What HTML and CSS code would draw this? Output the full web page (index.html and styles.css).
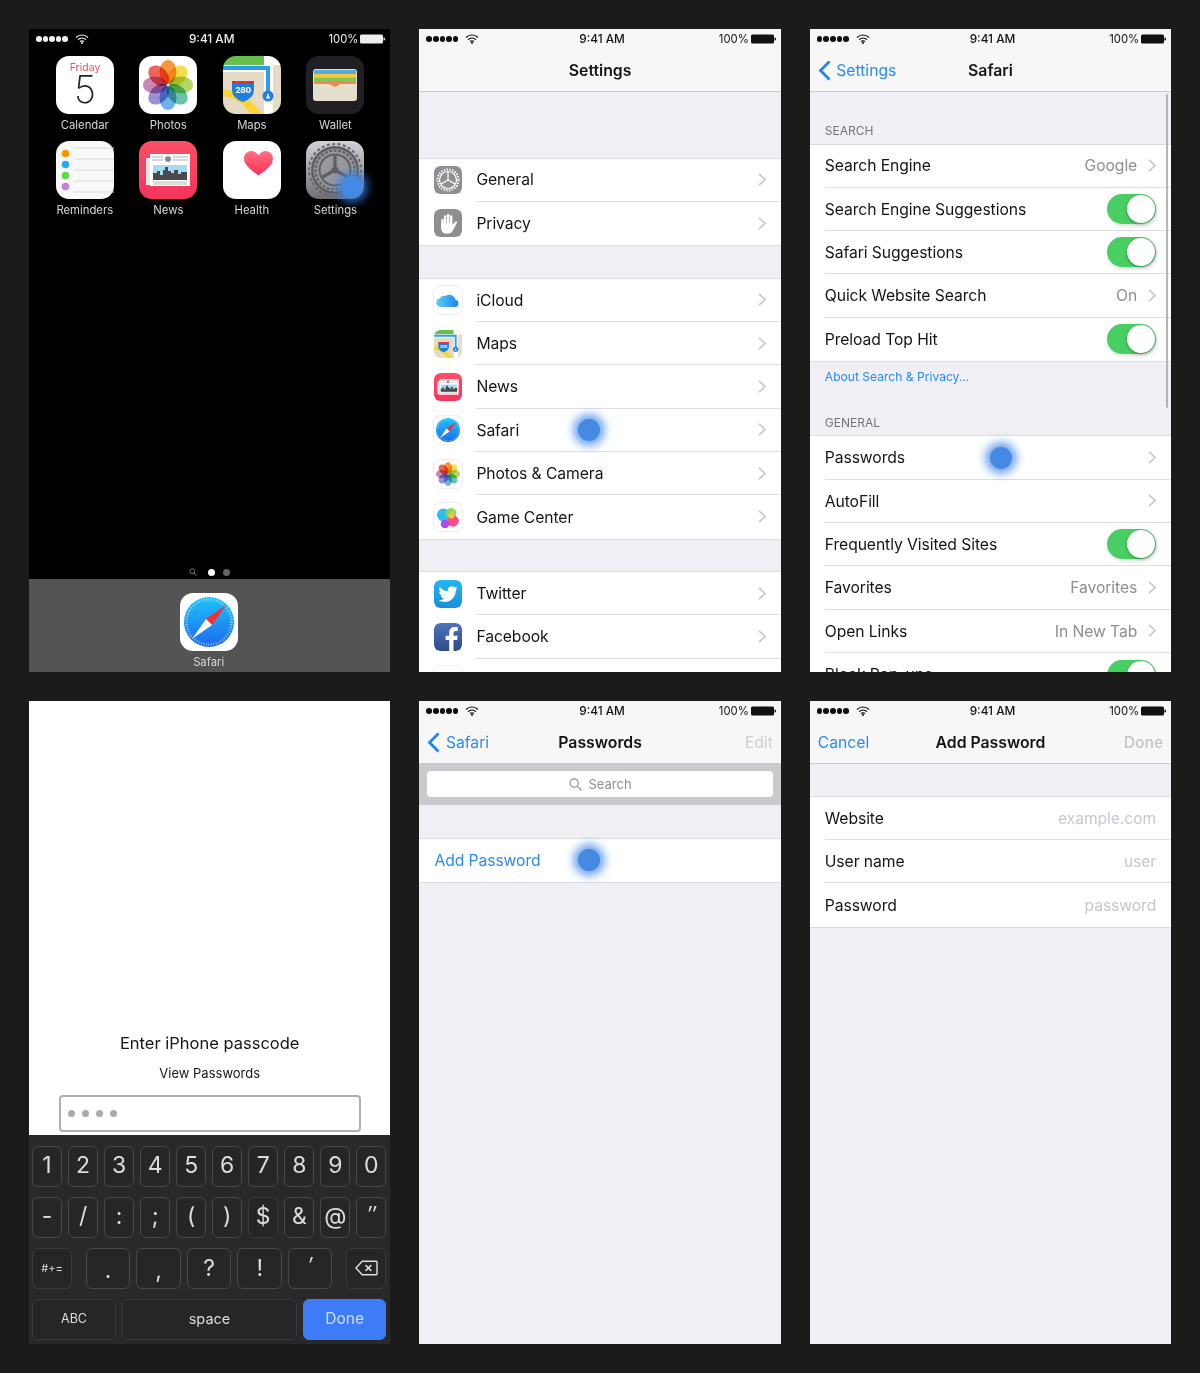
FILE: index.html
```html
<!DOCTYPE html>
<html lang="en">
<head>
<meta charset="utf-8">
<title>iOS Safari passwords walkthrough</title>
<link rel="stylesheet" href="styles.css">
</head>
<body>
<svg class="sprite" aria-hidden="true">
  <defs>
    <linearGradient id="g-safari" x1="0" y1="0" x2="0" y2="1"><stop offset="0" stop-color="#1fc4fb"/><stop offset="1" stop-color="#1c68ee"/></linearGradient>
    <linearGradient id="g-news" x1="0" y1="0" x2="0" y2="1"><stop offset="0" stop-color="#fc4f68"/><stop offset="1" stop-color="#f5345c"/></linearGradient>
    <linearGradient id="g-heart" x1="0" y1="0" x2="0" y2="1"><stop offset="0" stop-color="#ff6f83"/><stop offset="1" stop-color="#ff2d55"/></linearGradient>
    <linearGradient id="g-gear" x1="0" y1="0" x2="0" y2="1"><stop offset="0" stop-color="#d3d3d7"/><stop offset="1" stop-color="#6e6e74"/></linearGradient>
    <linearGradient id="g-tw" x1="0" y1="0" x2="0" y2="1"><stop offset="0" stop-color="#22b6f2"/><stop offset="1" stop-color="#1a8fd8"/></linearGradient>
    <linearGradient id="g-fb" x1="0" y1="0" x2="0" y2="1"><stop offset="0" stop-color="#4f74b8"/><stop offset="1" stop-color="#2c4b8c"/></linearGradient>
    <linearGradient id="g-cloud" x1="0" y1="0" x2="1" y2="0"><stop offset="0" stop-color="#5dd0f7"/><stop offset="1" stop-color="#1d84ee"/></linearGradient>

    <symbol id="i-calendar" viewBox="0 0 58 58">
      <rect width="58" height="58" rx="13" fill="#fff"/>
      <text x="29" y="15" class="svg-cal-day">Friday</text>
      <text x="29" y="47" class="svg-cal-num">5</text>
    </symbol>
    <symbol id="i-photos" viewBox="0 0 58 58">
      <rect width="58" height="58" rx="13" fill="#fff"/>
      <g class="petals">
        <ellipse class="petal" cx="29" cy="16" rx="8.500" ry="12" fill="#f9983a"/>
        <ellipse class="petal" cx="29" cy="16" rx="8.500" ry="12" fill="#f2e04a" transform="rotate(45 29 29)"/>
        <ellipse class="petal" cx="29" cy="16" rx="8.500" ry="12" fill="#aed766" transform="rotate(90 29 29)"/>
        <ellipse class="petal" cx="29" cy="16" rx="8.500" ry="12" fill="#66c4ab" transform="rotate(135 29 29)"/>
        <ellipse class="petal" cx="29" cy="16" rx="8.500" ry="12" fill="#6fb1ea" transform="rotate(180 29 29)"/>
        <ellipse class="petal" cx="29" cy="16" rx="8.500" ry="12" fill="#9c90d4" transform="rotate(225 29 29)"/>
        <ellipse class="petal" cx="29" cy="16" rx="8.500" ry="12" fill="#cb86b8" transform="rotate(270 29 29)"/>
        <ellipse class="petal" cx="29" cy="16" rx="8.500" ry="12" fill="#ec655c" transform="rotate(315 29 29)"/>
      </g>
    </symbol>
    <symbol id="i-maps" viewBox="0 0 58 58">
      <clipPath id="c-maps"><rect width="58" height="58" rx="13"/></clipPath>
      <g clip-path="url(#c-maps)">
        <rect width="58" height="58" fill="#e6dcc6"/>
        <rect width="41" height="9" fill="#68bf4b"/>
        <rect x="41" width="17" height="9" fill="#fff"/>
        <path d="M49 0h9v9z" fill="#f6c6d4"/>
        <rect x="41" width="9" height="58" fill="#fff"/>
        <rect x="0" y="9" width="45" height="7" fill="#fff"/>
        <path d="M0 12h45v24" fill="none" stroke="#2f9bf0" stroke-width="4"/>
        <path d="M0 40q12 2 20 9l8 9h12l-12-13q-12-10-28-12z" fill="#fbd436"/>
        <path d="M9 27h22v7q0 8-11 12-11-4-11-12z" fill="#1f7fe0"/>
        <path d="M9 25h22v3H9z" fill="#d8343a"/>
        <text x="20" y="36.500" class="svg-shield">280</text>
        <circle cx="45" cy="40" r="5.500" fill="#1f7fe0"/>
        <path d="M45 37l2 5.500h-4z" fill="#fff"/>
      </g>
    </symbol>
    <symbol id="i-wallet" viewBox="0 0 58 58">
      <rect width="58" height="58" rx="13" fill="#202024"/>
      <rect x="7" y="13" width="44" height="32" rx="3" fill="#e4decd"/>
      <rect x="8" y="14" width="42" height="4" fill="#58abd8"/>
      <rect x="8" y="18" width="42" height="3.500" fill="#f0cb40"/>
      <rect x="8" y="21.500" width="42" height="3.500" fill="#80c45c"/>
      <path d="M8 25h42v3H36q-3 0-5 2l-2 1-2-1q-2-2-5-2H8z" fill="#ee8a50"/>
    </symbol>
    <symbol id="i-reminders" viewBox="0 0 58 58">
      <rect width="58" height="58" rx="13" fill="#f8f8f8"/>
      <path d="M18 7h40M18 18h40M18 29h40M18 40h40M18 51h40" stroke="#d8d8d8" stroke-width="1"/>
      <circle cx="9.500" cy="12.500" r="3.800" fill="#ff9500"/>
      <circle cx="9.500" cy="23.500" r="3.800" fill="#2aa9f5"/>
      <circle cx="9.500" cy="34.500" r="3.800" fill="#63d84a"/>
      <circle cx="9.500" cy="45.500" r="3.800" fill="#c77ee0"/>
    </symbol>
    <symbol id="i-news" viewBox="0 0 58 58">
      <rect width="58" height="58" rx="13" fill="url(#g-news)"/>
      <path d="M7 17h4v27H7z" fill="#e8e8ea"/>
      <rect x="11" y="13" width="40" height="32" fill="#fff"/>
      <circle cx="29" cy="18" r="3" fill="#8a8a8e"/>
      <path d="M13 16h11M34 16h15M13 19h11M34 19h15" stroke="#9b9b9f" stroke-width=".8"/>
      <rect x="14" y="24" width="34" height="15" fill="#a7dbf4"/>
      <path d="M14 39v-7h4v-2h3v4h3v-5h2v-3h3v4h3v2h3v-3h4v4h3v-2h6v8z" fill="#4a4a4c"/>
      <path d="M14 41h34M14 43h34" stroke="#9b9b9f" stroke-width=".7"/>
    </symbol>
    <symbol id="i-health" viewBox="0 0 58 58">
      <rect width="58" height="58" rx="13" fill="#fff"/>
      <path d="M35.500 34.500C29 29.500 21 24.500 21 17.500 21 13 24.500 10 28 10c3.300 0 6 1.800 7.500 4.500C37 11.800 39.700 10 43 10c3.500 0 7 3 7 7.500 0 7-8 12-14.500 17z" fill="url(#g-heart)"/>
    </symbol>
    <symbol id="i-settings" viewBox="0 0 58 58">
      <rect width="58" height="58" rx="13" fill="url(#g-gear)"/>
      <circle cx="29" cy="29" r="26" fill="none" stroke="#66666a" stroke-width="2" stroke-dasharray="3 2.400"/>
      <circle cx="29" cy="29" r="24" fill="#5f5f63"/>
      <circle cx="29" cy="29" r="21.500" fill="#9a9a9e"/>
      <circle cx="29" cy="29" r="19.500" fill="none" stroke="#66666a" stroke-width="2.500" stroke-dasharray="3 1.500"/>
      <circle cx="29" cy="29" r="16.500" fill="#5f5f63"/>
      <circle cx="29" cy="29" r="14.500" fill="#98989c"/>
      <path d="M29 29V14.500M29 29l12.500 7.200M29 29l-12.500 7.200" stroke="#5f5f63" stroke-width="3.200"/>
      <circle cx="29" cy="29" r="3.500" fill="#5f5f63"/>
    </symbol>
    <symbol id="i-safari" viewBox="0 0 58 58">
      <rect width="58" height="58" rx="13" fill="#fff"/>
      <circle cx="29" cy="29" r="25" fill="url(#g-safari)"/>
      <circle cx="29" cy="29" r="22.500" fill="none" stroke="#fff" stroke-opacity=".7" stroke-width="2.500" stroke-dasharray=".7 1.800"/>
      <path d="M46 12L32 32 26 26z" fill="#ff2d2d"/>
      <path d="M12 46L26 26 32 32z" fill="#fff"/>
    </symbol>
    <symbol id="i-general" viewBox="0 0 28 28">
      <rect width="28" height="28" rx="6" fill="#8e8e93"/>
      <circle cx="14" cy="14" r="10.500" fill="none" stroke="#fff" stroke-width="2" stroke-dasharray="1.500 1.300"/>
      <circle cx="14" cy="14" r="8.500" fill="none" stroke="#fff" stroke-width="1.200"/>
      <path d="M14 14V6M14 14l7 4M14 14l-7 4" stroke="#fff" stroke-width="1.200"/>
    </symbol>
    <symbol id="i-hand" viewBox="0 0 28 28">
      <rect width="28" height="28" rx="6" fill="#8e8e93"/>
      <path d="M8.500 11v8M11.200 7.500V15M14.200 6v9M17.200 7.500V15" stroke="#fff" stroke-width="2.400" stroke-linecap="round"/>
      <path d="M7.300 14h11.100v2l3-3.500c1-.8 2.200.2 1.500 1.300l-3.600 7c-1 2.400-2.600 3.700-5 3.700h-2c-3 0-5-2-5-5z" fill="#fff"/>
    </symbol>
    <symbol id="i-icloud" viewBox="0 0 28 28">
      <rect width="28" height="28" rx="6" fill="#fff"/>
      <path d="M6.500 21a4.300 4.300 0 0 1-.8-8.500 5 5 0 0 1 5.800-2.500 6.200 6.200 0 0 1 9.800 3.800 3.700 3.700 0 0 1 .5 7.200z" fill="url(#g-cloud)"/>
    </symbol>
    <symbol id="i-gamecenter" viewBox="0 0 28 28">
      <rect width="28" height="28" rx="6" fill="#fff"/>
      <circle cx="9.500" cy="12" r="6.500" fill="#2dbcf5"/>
      <circle cx="17" cy="10.500" r="5.500" fill="#8bd44a" opacity=".9"/>
      <circle cx="19" cy="18" r="5.800" fill="#f7477f" opacity=".95"/>
      <circle cx="11" cy="21" r="4.300" fill="#a646e8" opacity=".95"/>
      <circle cx="17.500" cy="12.500" r="3" fill="#f3c532"/>
    </symbol>
    <symbol id="i-twitter" viewBox="0 0 28 28">
      <rect width="28" height="28" rx="6" fill="url(#g-tw)"/>
      <g transform="translate(4.500 4.500) scale(.8)"><path fill="#fff" d="M23.953 4.570a10 10 0 0 1-2.825.775 4.958 4.958 0 0 0 2.163-2.723c-.951.555-2.005.959-3.127 1.184a4.920 4.920 0 0 0-8.384 4.482C7.690 8.095 4.067 6.130 1.640 3.162a4.822 4.822 0 0 0-.666 2.475c0 1.710.870 3.213 2.188 4.096a4.904 4.904 0 0 1-2.228-.616v.060a4.923 4.923 0 0 0 3.946 4.827 4.996 4.996 0 0 1-2.212.085 4.936 4.936 0 0 0 4.604 3.417 9.867 9.867 0 0 1-6.102 2.105c-.390 0-.779-.023-1.170-.067a13.995 13.995 0 0 0 7.557 2.209c9.053 0 13.998-7.496 13.998-13.985 0-.210 0-.420-.015-.630A9.935 9.935 0 0 0 24 4.590z"/></g>
    </symbol>
    <symbol id="i-facebook" viewBox="0 0 28 28">
      <rect width="28" height="28" rx="6" fill="url(#g-fb)"/>
      <path fill="#fff" d="M19.500 28V17h3.600l.6-4.300h-4.200V10c0-1.200.4-2.100 2.100-2.100h2.200V4.200c-.4 0-1.700-.2-3.200-.2-3.200 0-5.400 1.900-5.400 5.500v3.200h-3.600V17h3.600v11z"/>
    </symbol>
    <symbol id="i-blank" viewBox="0 0 28 28">
      <rect width="28" height="28" rx="6" fill="#fff"/>
    </symbol>
    <symbol id="i-wifi" viewBox="0 0 14 10">
      <path d="M1 3.500a8.500 8.500 0 0 1 12 0M3 5.700a5.600 5.600 0 0 1 8 0M5 7.700a2.800 2.800 0 0 1 4 0" fill="none" stroke="currentColor" stroke-width="1.200"/>
      <circle cx="7" cy="9" r="1" fill="currentColor"/>
    </symbol>
    <symbol id="i-battery" viewBox="0 0 25 10">
      <rect x="0" y="0.500" width="23" height="9" rx="1.500" fill="currentColor"/>
      <path d="M23.500 3.500c1 0 1.500.5 1.500 1.500s-.5 1.500-1.500 1.500z" fill="currentColor"/>
    </symbol>
    <symbol id="i-chev" viewBox="0 0 8 13">
      <path d="M1 .8l6 5.700-6 5.700" fill="none" stroke="#c7c7cc" stroke-width="1.600"/>
    </symbol>
    <symbol id="i-back" viewBox="0 0 13 21">
      <path d="M11.500 1.500l-9 9 9 9" fill="none" stroke="#1f84ee" stroke-width="2.800"/>
    </symbol>
  </defs>
</svg>

<main class="board">

  <section class="screen home">
    <div class="status status-light">
      <div class="status-left"><span class="signal"><i></i><i></i><i></i><i></i><i></i></span><svg class="wifi"><use href="#i-wifi"/></svg></div>
      <div class="time">9:41 AM</div>
      <div class="status-right">100%<svg class="battery"><use href="#i-battery"/></svg></div>
    </div>
    <div class="apps">
      <div class="app"><svg class="app-icon"><use href="#i-calendar"/></svg><span>Calendar</span></div>
      <div class="app"><svg class="app-icon"><use href="#i-photos"/></svg><span>Photos</span></div>
      <div class="app"><svg class="app-icon"><use href="#i-maps"/></svg><span>Maps</span></div>
      <div class="app"><svg class="app-icon"><use href="#i-wallet"/></svg><span>Wallet</span></div>
      <div class="app"><svg class="app-icon"><use href="#i-reminders"/></svg><span>Reminders</span></div>
      <div class="app"><svg class="app-icon"><use href="#i-news"/></svg><span>News</span></div>
      <div class="app"><svg class="app-icon"><use href="#i-health"/></svg><span>Health</span></div>
      <div class="app"><svg class="app-icon"><use href="#i-settings"/></svg><span>Settings</span></div>
    </div>
    <div class="pager">
      <svg class="pager-search" viewBox="0 0 8 8"><circle cx="3.200" cy="3.200" r="2.400" fill="none" stroke="#777" stroke-width="1"/><path d="M5 5l2.500 2.500" stroke="#777" stroke-width="1"/></svg>
      <i class="pager-dot pager-on"></i>
      <i class="pager-dot"></i>
    </div>
    <div class="dock">
      <div class="app"><svg class="app-icon"><use href="#i-safari"/></svg><span>Safari</span></div>
    </div>
    <b class="touch touch-settings"></b>
  </section>

  <section class="screen">
    <header class="head">
      <div class="status">
        <div class="status-left"><span class="signal"><i></i><i></i><i></i><i></i><i></i></span><svg class="wifi"><use href="#i-wifi"/></svg></div>
        <div class="time">9:41 AM</div>
        <div class="status-right">100%<svg class="battery"><use href="#i-battery"/></svg></div>
      </div>
      <div class="nav"><div></div><h1>Settings</h1><div></div></div>
    </header>
    <div class="group gap-first">
      <div class="row"><svg class="row-icon"><use href="#i-general"/></svg><div class="row-body"><span class="row-label">General</span><svg class="chev"><use href="#i-chev"/></svg></div></div>
      <div class="row"><svg class="row-icon"><use href="#i-hand"/></svg><div class="row-body"><span class="row-label">Privacy</span><svg class="chev"><use href="#i-chev"/></svg></div></div>
    </div>
    <div class="group gap-section">
      <div class="row"><svg class="row-icon bordered"><use href="#i-icloud"/></svg><div class="row-body"><span class="row-label">iCloud</span><svg class="chev"><use href="#i-chev"/></svg></div></div>
      <div class="row"><svg class="row-icon"><use href="#i-maps"/></svg><div class="row-body"><span class="row-label">Maps</span><svg class="chev"><use href="#i-chev"/></svg></div></div>
      <div class="row"><svg class="row-icon"><use href="#i-news"/></svg><div class="row-body"><span class="row-label">News</span><svg class="chev"><use href="#i-chev"/></svg></div></div>
      <div class="row"><svg class="row-icon bordered"><use href="#i-safari"/></svg><div class="row-body"><span class="row-label">Safari</span><svg class="chev"><use href="#i-chev"/></svg></div></div>
      <div class="row"><svg class="row-icon bordered"><use href="#i-photos"/></svg><div class="row-body"><span class="row-label">Photos &amp; Camera</span><svg class="chev"><use href="#i-chev"/></svg></div></div>
      <div class="row"><svg class="row-icon bordered"><use href="#i-gamecenter"/></svg><div class="row-body"><span class="row-label">Game Center</span><svg class="chev"><use href="#i-chev"/></svg></div></div>
    </div>
    <div class="group gap-section">
      <div class="row"><svg class="row-icon"><use href="#i-twitter"/></svg><div class="row-body"><span class="row-label">Twitter</span><svg class="chev"><use href="#i-chev"/></svg></div></div>
      <div class="row"><svg class="row-icon"><use href="#i-facebook"/></svg><div class="row-body"><span class="row-label">Facebook</span><svg class="chev"><use href="#i-chev"/></svg></div></div>
      <div class="row"><svg class="row-icon bordered"><use href="#i-blank"/></svg><div class="row-body"></div></div>
    </div>
    <b class="touch touch-safari"></b>
  </section>

  <section class="screen">
    <header class="head">
      <div class="status">
        <div class="status-left"><span class="signal"><i></i><i></i><i></i><i></i><i></i></span><svg class="wifi"><use href="#i-wifi"/></svg></div>
        <div class="time">9:41 AM</div>
        <div class="status-right">100%<svg class="battery"><use href="#i-battery"/></svg></div>
      </div>
      <div class="nav"><a class="nav-back"><svg class="back"><use href="#i-back"/></svg>Settings</a><h1>Safari</h1><div></div></div>
    </header>
    <div class="section-label label-first">SEARCH</div>
    <div class="group">
      <div class="row"><div class="row-body"><span class="row-label">Search Engine</span><span class="row-value">Google</span><svg class="chev"><use href="#i-chev"/></svg></div></div>
      <div class="row"><div class="row-body"><span class="row-label">Search Engine Suggestions</span><span class="toggle"></span></div></div>
      <div class="row"><div class="row-body"><span class="row-label">Safari Suggestions</span><span class="toggle"></span></div></div>
      <div class="row"><div class="row-body"><span class="row-label">Quick Website Search</span><span class="row-value">On</span><svg class="chev"><use href="#i-chev"/></svg></div></div>
      <div class="row"><div class="row-body"><span class="row-label">Preload Top Hit</span><span class="toggle"></span></div></div>
    </div>
    <div class="section-note">About Search &amp; Privacy...</div>
    <div class="section-label label-next">GENERAL</div>
    <div class="group">
      <div class="row"><div class="row-body"><span class="row-label">Passwords</span><svg class="chev"><use href="#i-chev"/></svg></div></div>
      <div class="row"><div class="row-body"><span class="row-label">AutoFill</span><svg class="chev"><use href="#i-chev"/></svg></div></div>
      <div class="row"><div class="row-body"><span class="row-label">Frequently Visited Sites</span><span class="toggle"></span></div></div>
      <div class="row"><div class="row-body"><span class="row-label">Favorites</span><span class="row-value">Favorites</span><svg class="chev"><use href="#i-chev"/></svg></div></div>
      <div class="row"><div class="row-body"><span class="row-label">Open Links</span><span class="row-value">In New Tab</span><svg class="chev"><use href="#i-chev"/></svg></div></div>
      <div class="row"><div class="row-body"><span class="row-label">Block Pop-ups</span><span class="toggle"></span></div></div>
    </div>
    <b class="scrollbar"></b>
    <b class="touch touch-passwords"></b>
  </section>

  <section class="screen passcode">
    <div class="passcode-form">
      <h2>Enter iPhone passcode</h2>
      <p>View Passwords</p>
      <div class="passcode-field"><i></i><i></i><i></i><i></i></div>
    </div>
    <div class="keyboard">
      <div class="key-row">
        <span class="key">1</span><span class="key">2</span><span class="key">3</span><span class="key">4</span><span class="key">5</span><span class="key">6</span><span class="key">7</span><span class="key">8</span><span class="key">9</span><span class="key">0</span>
      </div>
      <div class="key-row">
        <span class="key">-</span><span class="key">/</span><span class="key">:</span><span class="key">;</span><span class="key">(</span><span class="key">)</span><span class="key key-dim">$</span><span class="key">&amp;</span><span class="key">@</span><span class="key key-quote">″</span>
      </div>
      <div class="key-row key-row-mid">
        <span class="key key-side key-dim key-small">#+=</span>
        <span class="key-center">
          <span class="key key-low">.</span><span class="key key-low">,</span><span class="key">?</span><span class="key">!</span><span class="key key-quote">′</span>
        </span>
        <span class="key key-side key-dim"><svg class="del" viewBox="0 0 24 16"><path d="M7.500 1H22a1 1 0 0 1 1 1v12a1 1 0 0 1-1 1H7.500L1 8z" fill="none" stroke="#ddd" stroke-width="1.500" stroke-linejoin="round"/><path d="M11 5l6 6M17 5l-6 6" stroke="#ddd" stroke-width="1.500"/></svg></span>
      </div>
      <div class="key-row key-row-bottom">
        <span class="key key-dim key-abc">ABC</span>
        <span class="key key-dim key-space">space</span>
        <span class="key key-done">Done</span>
      </div>
    </div>
  </section>

  <section class="screen">
    <header class="head">
      <div class="status">
        <div class="status-left"><span class="signal"><i></i><i></i><i></i><i></i><i></i></span><svg class="wifi"><use href="#i-wifi"/></svg></div>
        <div class="time">9:41 AM</div>
        <div class="status-right">100%<svg class="battery"><use href="#i-battery"/></svg></div>
      </div>
      <div class="nav"><a class="nav-back"><svg class="back"><use href="#i-back"/></svg>Safari</a><h1>Passwords</h1><span class="nav-right">Edit</span></div>
    </header>
    <div class="search-band">
      <div class="search-field"><svg class="search-glass" viewBox="0 0 14 14"><circle cx="5.500" cy="5.500" r="4.500" fill="none" stroke="#8e8e93" stroke-width="1.200"/><path d="M9 9l4.500 4.500" stroke="#8e8e93" stroke-width="1.300"/></svg>Search</div>
    </div>
    <div class="group gap-section">
      <div class="row"><div class="row-body"><span class="row-label row-link">Add Password</span></div></div>
    </div>
    <b class="touch touch-add"></b>
  </section>

  <section class="screen">
    <header class="head">
      <div class="status">
        <div class="status-left"><span class="signal"><i></i><i></i><i></i><i></i><i></i></span><svg class="wifi"><use href="#i-wifi"/></svg></div>
        <div class="time">9:41 AM</div>
        <div class="status-right">100%<svg class="battery"><use href="#i-battery"/></svg></div>
      </div>
      <div class="nav"><a class="nav-back">Cancel</a><h1>Add Password</h1><span class="nav-right nav-strong">Done</span></div>
    </header>
    <div class="group gap-form">
      <div class="row"><div class="row-body"><span class="row-label">Website</span><span class="placeholder">example.com</span></div></div>
      <div class="row"><div class="row-body"><span class="row-label">User name</span><span class="placeholder">user</span></div></div>
      <div class="row"><div class="row-body"><span class="row-label">Password</span><span class="placeholder">password</span></div></div>
    </div>
  </section>

</main>
</body>
</html>
```

FILE: styles.css
```css
* { box-sizing: border-box; }

html, body { margin: 0; }

body {
  background: #1b1b1c;
  font-family: Inter, "Liberation Sans", sans-serif;
  color: #141414;
}

.sprite { position: absolute; width: 0; height: 0; }

.board {
  display: grid;
  grid-template-columns: repeat(3, 361.4px);
  grid-template-rows: 643px 642.5px;
  column-gap: 29px;
  row-gap: 29px;
  padding: 29px;
}

.screen {
  position: relative;
  overflow: hidden;
  background: #efeff4;
}

/* status bar */
.status {
  display: grid;
  grid-template-columns: 1fr auto 1fr;
  align-items: center;
  height: 20px;
  padding: 0 5px 0 7px;
  font-size: 11.3px;
  color: #111;
}
.status-light { color: #eee; }
.status-left { display: flex; align-items: center; gap: 7px; }
.signal { display: flex; gap: 1px; }
.signal i { width: 5.6px; height: 5.6px; border-radius: 50%; background: currentColor; }
.wifi { width: 14px; height: 10px; }
.time { font-size: 11.8px; font-weight: 500; padding-left: 2px; }
.status-right { display: flex; justify-content: flex-end; align-items: center; gap: 2px; font-weight: 400; }
.battery { width: 25px; height: 10px; }

/* nav */
.head {
  height: 63px;
  background: #f7f7f8;
  border-bottom: 1px solid #c9c9cd;
}
.nav {
  display: grid;
  grid-template-columns: 1fr auto 1fr;
  align-items: center;
  height: 42px;
  padding: 0 8px;
  font-size: 15.7px;
}
.nav h1 { margin: 0; font-size: 15.8px; font-weight: 600; }
.nav-back { display: flex; align-items: center; gap: 5.5px; color: #2a8bf2; }
.back { width: 13px; height: 21px; }
.nav-right { text-align: right; color: #cfcfd3; }
.nav-strong { font-weight: 500; color: #c4c4c9; }

/* rows */
.group {
  background: #fff;
  box-shadow: 0 -1px 0 #dcdce0, 0 1px 0 #dcdce0;
}
.gap-first { margin-top: 66.5px; }
.gap-section { margin-top: 33.5px; }
.gap-form { margin-top: 32.8px; }

.row {
  display: flex;
  align-items: center;
  height: 43.33px;
  padding-left: 15px;
  font-size: 15.7px;
  letter-spacing: -.08px;
}
.row-icon { flex: none; width: 28px; height: 28px; margin-right: 14px; border-radius: 6px; }
.bordered { box-shadow: 0 0 0 1px #eeeef0; }
.row-body {
  flex: 1;
  display: flex;
  align-items: center;
  height: 100%;
  padding-right: 15px;
  border-bottom: 1px solid #dedee2;
}
.row:last-child .row-body { border-bottom: 0; }
.row-label { flex: 1; padding-top: .5px; }
.row-link { color: #2a8bf2; }
.row-value { color: #8e8e93; margin-right: 11px; padding-top: .5px; }
.placeholder { color: #c7c7cd; padding-top: .5px; }
.chev { flex: none; width: 8px; height: 13px; }

.toggle {
  position: relative;
  flex: none;
  width: 49px;
  height: 30px;
  border-radius: 15px;
  background: #48ce63;
  box-shadow: 1px 2px 4px rgba(0, 0, 0, .15);
}
.toggle::after {
  content: "";
  position: absolute;
  top: 1px;
  right: 1px;
  width: 28px;
  height: 28px;
  border-radius: 50%;
  background: #fff;
  box-shadow: 0 1px 3px rgba(0, 0, 0, .35);
}

.section-label {
  display: flex;
  align-items: flex-end;
  padding: 0 15px 5.7px;
  font-size: 12px;
  line-height: 16px;
  color: #75757a;
}
.label-first { height: 52.5px; }
.label-next { height: 51.3px; }
.section-note {
  height: 24px;
  padding: 8px 15px 0;
  font-size: 12.1px;
  line-height: 16px;
  color: #2a8bf2;
}

.scrollbar {
  position: absolute;
  top: 65px;
  right: 3px;
  width: 2.5px;
  height: 314px;
  border-radius: 2px;
  background: #b4b4b8;
}

/* touch marker */
.touch {
  position: absolute;
  width: 22px;
  height: 22px;
  border-radius: 50%;
  background: #458ae2;
  box-shadow: 0 0 9px 5px rgba(58, 130, 230, .72);
}
.touch-settings { left: 312px; top: 147px; }
.touch-safari { left: 159px; top: 390px; }
.touch-passwords { left: 180px; top: 418px; }
.touch-add { left: 159px; top: 148px; }

/* home */
.home {
  display: flex;
  flex-direction: column;
  background: #000;
}
.apps {
  display: grid;
  grid-template-columns: repeat(4, 1fr);
  row-gap: 9px;
  margin-top: 7px;
  padding: 0 13.2px 0 14px;
}
.app {
  display: flex;
  flex-direction: column;
  align-items: center;
  font-size: 11.3px;
  line-height: 14px;
  color: #d6d6d6;
}
.app span { margin-top: 4px; }
.app-icon { width: 58px; height: 58px; }
.pager {
  display: flex;
  align-items: center;
  justify-content: center;
  gap: 8px;
  height: 10px;
  margin-top: auto;
  margin-bottom: 2px;
}
.pager-search { width: 8px; height: 8px; margin-right: 3px; }
.pager-dot { width: 7px; height: 7px; border-radius: 50%; background: #666; }
.pager-on { background: #fff; }
.dock {
  display: flex;
  justify-content: center;
  height: 93px;
  padding: 13.5px 2px 0 0;
  background: #545454;
}
.dock .app span { margin-top: 4px; }

.petals { isolation: isolate; }
.petal { mix-blend-mode: multiply; }

.svg-cal-day { font-size: 10.5px; fill: #f0525c; text-anchor: middle; }
.svg-cal-num { font-size: 38px; font-weight: 200; fill: #222; text-anchor: middle; }
.svg-shield { font-size: 8px; font-weight: 700; fill: #fff; text-anchor: middle; }

/* passcode */
.passcode {
  display: flex;
  flex-direction: column;
  justify-content: flex-end;
  background: #fff;
}
.passcode-form { text-align: center; height: 102.5px; }
.passcode-form h2 { margin: 0; font-size: 16.5px; font-weight: 400; line-height: 20px; }
.passcode-form p { margin: 12px 0 0; font-size: 13px; line-height: 16px; }
.passcode-field {
  display: flex;
  align-items: center;
  gap: 7px;
  width: 302px;
  height: 37px;
  margin: 14px auto 0;
  padding-left: 7px;
  border: 2px solid #b0b0b0;
  border-radius: 4px;
}
.passcode-field i { width: 7px; height: 7px; border-radius: 50%; background: #aaa; }

.keyboard {
  display: flex;
  flex-direction: column;
  gap: 10.3px;
  height: 208.5px;
  padding: 10.5px 4px 0 3px;
  background: #29292b;
}
.key-row {
  display: grid;
  grid-template-columns: repeat(10, 1fr);
  gap: 6px;
  height: 41px;
}
.key {
  display: flex;
  align-items: center;
  justify-content: center;
  height: 41px;
  padding-bottom: 2px;
  border: 1.5px solid #48484a;
  border-radius: 6px;
  background: #262628;
  font-size: 23px;
  color: #dcdcdc;
}
.key-dim { border-color: #3a3a3c; }
.key-low { align-items: flex-end; padding-bottom: 4px; }
.key-quote { font-style: italic; align-items: flex-start; font-size: 21px; padding-top: 4px; }
.key-row-mid {
  display: flex;
  justify-content: space-between;
  gap: 0;
}
.key-side { width: 40px; flex: none; }
.key-small { font-size: 11px; }
.key-center {
  display: grid;
  grid-template-columns: repeat(5, 44.5px);
  gap: 6px;
}
.del { width: 23px; height: 16px; }
.key-row-bottom {
  display: grid;
  grid-template-columns: 84px 175px 1fr;
}
.key-abc { font-size: 12.5px; }
.key-space { font-size: 14.5px; }
.key-done { background: #3e7bf7; border-color: #3e7bf7; font-size: 15.5px; color: #cbdcff; }

/* search */
.search-band {
  height: 41px;
  padding: 7px 8px;
  background: #c9c9ce;
}
.search-field {
  display: flex;
  align-items: center;
  justify-content: center;
  gap: 7px;
  height: 26px;
  border-radius: 4px;
  background: #fff;
  font-size: 13px;
  color: #8e8e93;
}
.search-glass { width: 13px; height: 13px; }
```
